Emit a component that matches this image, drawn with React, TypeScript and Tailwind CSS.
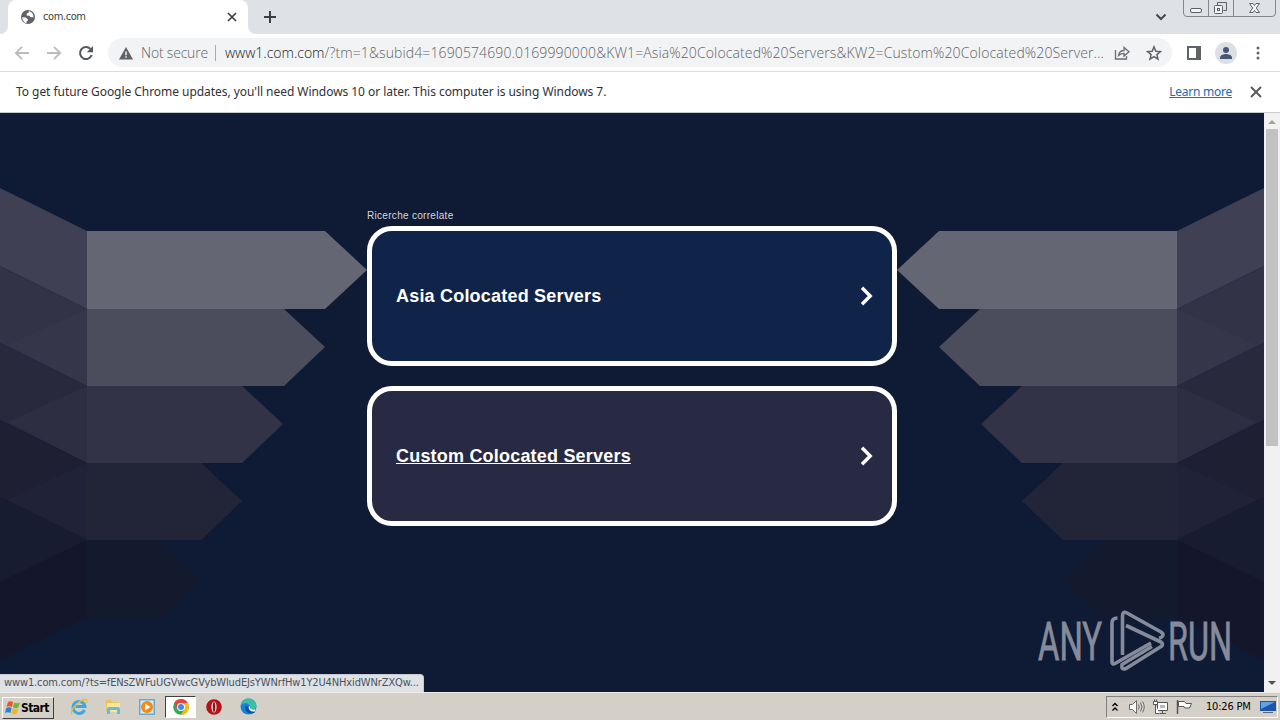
const leftShapes = [
  { points: '0,188 87,231 87,309 0,266', fill: '#3f4053' },
  { points: '87,231 325,231 367,270 325,309 87,309', fill: '#646673' },
  { points: '0,266 87,309 87,386 0,343', fill: '#323347' },
  { points: '8,345 87,309 87,386', fill: '#353649' },
  { points: '87,309 284,309 325,347 284,386 87,386', fill: '#4b4d5c' },
  { points: '0,343 87,386 87,463 0,420', fill: '#28293d' },
  { points: '8,422 87,386 87,463', fill: '#2e2e42' },
  { points: '87,386 242,386 283,424 242,463 87,463', fill: '#323346' },
  { points: '0,420 87,463 87,540 0,497', fill: '#1e1f33' },
  { points: '8,500 87,463 87,540', fill: '#202337' },
  { points: '87,463 201,463 242,501 201,540 87,540', fill: '#222538' },
  { points: '0,497 87,540 0,582', fill: '#181c31' },
  { points: '0,582 87,540 87,617 0,660', fill: '#14172c' },
  { points: '87,540 160,540 201,579 160,617 87,617', fill: '#141a2e' },
];

function Arrows() {
  return (
    <>
      {leftShapes.map((s) => (
        <polygon key={s.points} points={s.points} fill={s.fill} />
      ))}
    </>
  );
}

function Backdrop() {
  return (
    <svg className="absolute inset-0" width="1264" height="579" viewBox="0 113 1264 579">
      <Arrows />
      <g transform="translate(1264 0) scale(-1 1)">
        <Arrows />
      </g>
    </svg>
  );
}

function TabStrip() {
  return (
    <div className="flex h-[34px] bg-[#dee1e6]">
      <div className="flex w-2 items-end bg-white">
        <div className="h-full w-full rounded-br-lg bg-[#dee1e6]" />
      </div>
      <div className="flex w-[240px] items-center rounded-t-lg bg-white pl-3 pr-[10px]">
        <svg width="16" height="16" viewBox="0 0 16 16">
          <circle cx="8" cy="8" r="7" fill="#5f6368" />
          <path d="M2.300 8.200l3.600.2 2 2-.2 1.600-1.200.5v1.600C4 13.700 2.200 11 2.300 8.200zM8.500 2.300l.2 1.500-1.900.8-.2 1.900 2.700.2 1.400 1.500 2.900.1C13.500 4.600 11 2.300 8.500 2.300z" fill="#fff" />
        </svg>
        <span className="ml-[7px] mt-px flex-1 font-['DejaVu_Sans_Condensed','DejaVu_Sans',sans-serif] text-[11px] tracking-[-0.4px] text-[#3c4043]">com.com</span>
        <svg width="12" height="12" viewBox="0 0 12 12" stroke="#3c4043" strokeWidth="1.700">
          <path d="M2 2l8 8M10 2l-8 8" />
        </svg>
      </div>
      <div className="w-2 bg-white">
        <div className="h-full w-full rounded-bl-lg bg-[#dee1e6]" />
      </div>
      <div className="flex flex-1 items-center pl-[7px]">
        <svg width="14" height="14" viewBox="0 0 14 14" stroke="#3c4043" strokeWidth="2">
          <path d="M7 1v12M1 7h12" />
        </svg>
      </div>
      <svg className="mr-4 mt-[11px]" width="12" height="12" viewBox="0 0 12 12" fill="none" stroke="#45484c" strokeWidth="2">
        <path d="M1.500 3.500L6 8l4.500-4.500" />
      </svg>
      <svg className="mr-[3px]" width="94" height="18" viewBox="0 0 94 18" fill="none" stroke="#84878c">
        <path d="M.5 0v13q0 3.500 3.500 3.500h85q3.500 0 3.500-3.500V0M25.500 0v16M50.500 0v16" />
        <g stroke="#5d6065">
          <rect x="7.500" y="8.500" width="11" height="4" rx="1.500" fill="#f3f4f6" />
          <path d="M34.500 5.500v-3h9v8h-3" />
          <rect x="31.500" y="5.500" width="8" height="8" rx="1" fill="#f3f4f6" />
          <rect x="34.500" y="8.500" width="2" height="2" />
          <path d="M66.500 3.500h3.500l1.500 2 1.500-2h3.500l-3.200 4.500 3.200 4.500h-3.500l-1.500-2-1.500 2h-3.500L69.700 8z" fill="#f3f4f6" />
        </g>
      </svg>
    </div>
  );
}

function Toolbar() {
  return (
    <div className="flex h-[38px] items-center border-b border-[#dadce0] bg-white">
      <svg className="ml-[14px]" width="16" height="16" viewBox="0 0 16 16" fill="none" stroke="#babcbe" strokeWidth="1.800">
        <path d="M15 8H2M8 1.800L1.800 8 8 14.200" />
      </svg>
      <svg className="ml-4" width="16" height="16" viewBox="0 0 16 16" fill="none" stroke="#babcbe" strokeWidth="1.800">
        <path d="M1 8h13M8 1.800L14.200 8 8 14.200" />
      </svg>
      <svg className="ml-4" width="16" height="16" viewBox="0 0 16 16" fill="none">
        <path d="M13.700 10A6 6 0 1 1 12.400 3.900" stroke="#53565a" strokeWidth="2" />
        <path d="M15 1v6.200H8.800z" fill="#53565a" />
      </svg>
      <div className="ml-[14px] flex h-[29px] w-[1064px] items-center rounded-full bg-[#f1f3f4] pl-[11px] pr-[10px] font-['Open_Sans','Noto_Sans',sans-serif] text-[14px] font-light">
        <svg width="14" height="14" viewBox="0 0 14 14">
          <path d="M7 1l7 12.500H0z" fill="#5f6368" />
          <path d="M6.300 5.500h1.400v3.700H6.300zM6.300 10.300h1.400v1.400H6.300z" fill="#fff" />
        </svg>
        <span className="ml-[8px] w-[67px] whitespace-nowrap tracking-[-0.2px] text-[#5f6368]">Not secure</span>
        <span className="ml-[7px] h-4 w-px bg-[#a8abaf]" />
        <span className="ml-[9px] flex-1 whitespace-nowrap tracking-[0.12px] text-[#5f6368]">
          <span className="tracking-normal text-[#202124]">www1.com.com</span>/?tm=1&amp;subid4=1690574690.0169990000&amp;KW1=Asia%20Colocated%20Servers&amp;KW2=Custom%20Colocated%20Server...
        </span>
        <svg width="16" height="16" viewBox="0 0 16 16" fill="none" stroke="#6a6d72" strokeWidth="1.300">
          <path d="M1.500 5v9h11v-3M4.500 10.500c.5-3.500 2.500-5 5.500-5V2.500L15 6.800 10 11V8.300c-2.500 0-4 .7-5.500 2.200z" />
        </svg>
        <svg className="ml-4" width="16" height="16" viewBox="0 0 16 16" fill="none" stroke="#5f6368" strokeWidth="1.500">
          <path d="M8 1.800l1.800 4.400 4.700.4-3.600 3 1.100 4.600-4-2.500-4 2.500 1.100-4.600-3.600-3 4.700-.4z" />
        </svg>
      </div>
      <svg className="ml-[14px]" width="16" height="16" viewBox="0 0 16 16">
        <path d="M1 1h14v14H1zM3 3v10h7V3z" fill="#5f6368" fillRule="evenodd" />
      </svg>
      <svg className="ml-[13px]" width="22" height="22" viewBox="0 0 22 22">
        <circle cx="11" cy="11" r="11" fill="#dce0e6" />
        <circle cx="11" cy="8" r="3" fill="#4a5773" />
        <path d="M5 17v-1.500c0-2.500 4-3.500 6-3.500s6 1 6 3.500V17z" fill="#4a5773" />
      </svg>
      <svg className="ml-[18px]" width="6" height="16" viewBox="0 0 6 16" fill="#5f6368">
        <circle cx="3" cy="3" r="1.500" />
        <circle cx="3" cy="8" r="1.500" />
        <circle cx="3" cy="13" r="1.500" />
      </svg>
    </div>
  );
}

function InfoBar() {
  return (
    <div className="flex h-[41px] items-center border-b border-[#c9ccd1] bg-white pl-4 pr-[18px] font-['Noto_Sans',sans-serif] text-[12px] text-[#303134]">
      <span className="flex-1 whitespace-nowrap tracking-[-0.05px]">
        To get future Google Chrome updates, you'll need Windows 10 or later. This computer is using Windows 7.
      </span>
      <a className="whitespace-nowrap tracking-[-0.25px] text-[#2468b8] underline" href="#">Learn more</a>
      <svg className="ml-[18px]" width="12" height="12" viewBox="0 0 12 12" stroke="#53565a" strokeWidth="1.800">
        <path d="M1 1l10 10M11 1L1 11" />
      </svg>
    </div>
  );
}

function Chevron() {
  return (
    <svg width="14" height="20" viewBox="0 0 14 20" fill="none" stroke="#fff" strokeWidth="3.400">
      <path d="M2 1.800L10.200 10 2 18.200" />
    </svg>
  );
}

function Watermark() {
  return (
    <svg className="absolute left-[1030px] top-[491px]" width="220" height="74" viewBox="1030 604 220 74">
      <g fill="#868b9b" stroke="#868b9b" strokeWidth="0.800" fontFamily="Roboto, sans-serif" fontSize="53">
        <text x="1038" y="660" textLength="64" lengthAdjust="spacingAndGlyphs">ANY</text>
        <text x="1168" y="660" textLength="64" lengthAdjust="spacingAndGlyphs">RUN</text>
      </g>
      <g fill="none" stroke="#868b9b" strokeWidth="3.600" strokeLinejoin="round">
        <path d="M1117.500 618q-5.500 0-5.500 5v39q0 3 3 1.500L1151 643" />
        <path d="M1122.500 655v-39q0-5.500 4.500-3L1161 632q4 3 0 5.500l-2 .5" />
        <path d="M1126 625.500L1161 642q3 2 0 4.500l-35 22q-5 2-4-4l30-18" />
      </g>
    </svg>
  );
}

function Scrollbar() {
  return (
    <div className="flex w-4 flex-col items-center bg-[#f1f1f1]">
      <svg width="16" height="16" viewBox="0 0 16 16" fill="#a3a3a3">
        <path d="M4 11h8L8 7z" />
      </svg>
      <div className="h-[317px] w-3 bg-[#c1c1c1]" />
      <div className="flex-1" />
      <svg width="16" height="18" viewBox="0 0 16 18" fill="#505050">
        <path d="M4 7h8l-4 4z" />
      </svg>
    </div>
  );
}

function Page() {
  return (
    <div className="relative flex h-[579px]">
      <main className="relative flex-1 overflow-hidden bg-[#0f1b35]">
        <Backdrop />
        <div className="relative mx-auto w-[530px] pt-[96px] font-['Liberation_Sans',Arial,sans-serif]">
          <p className="h-[17px] text-[10px] leading-[14px] tracking-[0.3px] text-[#d5d8de]">Ricerche correlate</p>
          <a className="flex h-[140px] items-center justify-between rounded-[25px] border-[5px] border-white bg-[#10244a] pl-6 pr-[18px] text-white" href="#">
            <span className="text-[18px] font-bold tracking-[0.2px]">Asia Colocated Servers</span>
            <Chevron />
          </a>
          <a className="mt-5 flex h-[140px] items-center justify-between rounded-[25px] border-[5px] border-white bg-[#272a42] pl-6 pr-[18px] text-white" href="#">
            <span className="text-[18px] font-bold tracking-[0.2px] underline">Custom Colocated Servers</span>
            <Chevron />
          </a>
        </div>
        <Watermark />
      </main>
      <Scrollbar />
      <div className="absolute bottom-0 left-0 flex h-[18px] w-[424px] items-center whitespace-nowrap rounded-tr border-r border-t border-[#c5cad0] bg-[#dee1e6] pl-1 font-['DejaVu_Sans_Condensed','DejaVu_Sans',sans-serif] text-[11px] tracking-[-0.13px] text-[#4d5156]">
        www1.com.com/?ts=fENsZWFuUGVwcGVybWludEJsYWNrfHw1Y2U4NHxidWNrZXQw...
      </div>
    </div>
  );
}

function Taskbar() {
  return (
    <div className="flex h-7 items-center border-t border-[#eeece8] bg-[#d4d0c8] font-['DejaVu_Sans_Condensed','DejaVu_Sans',sans-serif] text-[11px] text-black">
      <button className="ml-[2px] mt-[2px] flex h-[22px] w-[52px] items-center border border-b-[#404040] border-l-white border-r-[#404040] border-t-white pl-[2px] text-[11px] font-bold">
        <svg width="16" height="16" viewBox="0 0 16 16">
          <path d="M3 2q3-1.500 5 0L7 7Q4 5.500 1.500 7z" fill="#e8572b" />
          <path d="M9 2.500q3 1.500 6 0l-1.500 5q-3 1.500-5.500 0z" fill="#77b82a" />
          <path d="M1.200 8q3-1.500 5.500 0l-1.300 5Q3 11.500 0 13z" fill="#2f80d0" />
          <path d="M7.700 8.500q3 1.500 5.500 0l-1.400 5q-3 1.500-5.400 0z" fill="#f5b51b" />
        </svg>
        <span className="text-[12px] tracking-[-0.6px]">Start</span>
      </button>
      <svg className="ml-4" width="18" height="18" viewBox="0 0 18 18" fill="none">
        <path d="M14.500 12A6 6 0 1 1 15 8.500H5.500" stroke="#3fa7df" strokeWidth="3" />
        <path d="M2 16C-.5 13 8 2.500 15 1.500c3-.3 2 2.500 1 4" stroke="#e6bd3e" strokeWidth="1.300" />
      </svg>
      <svg className="ml-4" width="18" height="18" viewBox="0 0 18 18">
        <path d="M2 2h5l1 2h7v10H2z" fill="#e4c25c" />
        <path d="M3 5h13v9H3z" fill="#f7e59a" />
        <path d="M3 16v-5q0-2 2-2h9q2 0 2 2v5h-3v-4H6v4z" fill="#6db6dc" />
      </svg>
      <svg className="ml-4" width="18" height="18" viewBox="0 0 18 18">
        <path d="M1 1h16v16H1z" fill="#68a9d5" />
        <path d="M2.500 2.500h13v13h-13z" fill="#d8edf8" />
        <circle cx="9" cy="9" r="6" fill="#f18a16" />
        <path d="M7 5.500L12.500 9 7 12.500z" fill="#fff" />
      </svg>
      <div className="ml-[9px] flex h-[22px] w-[31px] items-center justify-center border border-b-white border-l-[#404040] border-r-white border-t-[#404040] bg-white">
        <svg width="16" height="16" viewBox="0 0 16 16">
          <circle cx="8" cy="8" r="7.800" fill="#34a853" />
          <path d="M1.200 4.100A7.800 7.800 0 0 1 14.800 4.100H8L4.600 10z" fill="#ea4335" />
          <path d="M14.800 4.100A7.800 7.800 0 0 1 8 15.800L11.400 9.900V4.100z" fill="#fbbc05" />
          <circle cx="8" cy="8" r="4" fill="#fff" />
          <circle cx="8" cy="8" r="3" fill="#4285f4" />
        </svg>
      </div>
      <svg className="ml-[10px]" width="16" height="16" viewBox="0 0 16 16">
        <circle cx="8" cy="8" r="7.800" fill="#b3141a" />
        <ellipse cx="8" cy="8" rx="2.600" ry="5.500" fill="#e9dddd" />
        <ellipse cx="8" cy="8" rx="1.200" ry="5" fill="#9a1015" />
      </svg>
      <svg className="ml-[18px]" width="17" height="17" viewBox="0 0 17 17">
        <circle cx="8.500" cy="8.500" r="8" fill="#1683d8" />
        <path d="M.6 8C1 3.500 4.500.5 8.500.5c5 0 8 3.800 8 7 0 2.500-2 3.800-4.200 3.800-1.800 0-2.800-.7-2.300-1.500C11 7.500 8 5 5 5.300 3 5.500 1.500 6.500.6 8z" fill="#38bfa5" />
        <path d="M5.500 8c-1.500 4 2 7.500 6 7.500 2 0 3.300-1 4-2-3.500 1-7-.5-6-4.500z" fill="#0c529d" />
        <path d="M10 8q-1 4 5.500 3.300l-.8 2.200Q9 14 8.500 9z" fill="#e5eff5" />
      </svg>
      <div className="flex-1" />
      <div className="mr-[2px] mt-px flex h-[22px] w-[172px] items-center border border-b-white border-l-[#808080] border-r-white border-t-[#808080] pl-[4px]">
        <svg width="8" height="10" viewBox="0 0 8 10" fill="none" stroke="#000" strokeWidth="1.400">
          <path d="M1.500 4L4 1.500 6.500 4M1.500 8.500L4 6l2.500 2.500" />
        </svg>
        <svg className="ml-[9px]" width="18" height="16" viewBox="0 0 18 16" fill="none" stroke="#6c6c6c">
          <path d="M1.500 5.500h3l4-4v13l-4-4h-3z" fill="#fff" />
          <path d="M10.500 5.500q1.500 2.500 0 5M12.500 3.500q3 4.500 0 9M14.500 2.500q3.500 5.500 0 11" />
        </svg>
        <svg className="ml-[6px]" width="17" height="16" viewBox="0 0 17 16" fill="#fff" stroke="#555">
          <path d="M5.500 3.500h10v8h-10zM8 14.500h6M10.500 12v2" />
          <path d="M8 6h5v3H8z" fill="#b8b8b8" stroke="none" />
          <path d="M1.500 2.500h4v3h-4zM2.500.5v2M4.500.5v2M3.500 5.500v9h4" />
        </svg>
        <svg className="ml-[7px]" width="17" height="16" viewBox="0 0 17 16" fill="#fff" stroke="#555">
          <path d="M1.500 1v14" strokeWidth="1.500" />
          <path d="M2.500 2.500h6l1.500 2h5.500l-2 4.500H9L8 7.500H2.500z" />
        </svg>
        <span className="ml-[13px] mt-px w-[46px] whitespace-nowrap tracking-[-0.2px]">10:26 PM</span>
        <svg className="ml-[8px]" width="16" height="14" viewBox="0 0 16 14">
          <path d="M0 1h16v10H0z" fill="#1c55ad" />
          <path d="M1 2h14L1 9z" fill="#5fa2e2" />
          <path d="M3 12h10v1H3z" fill="#5a6470" />
        </svg>
      </div>
    </div>
  );
}

export default function App() {
  return (
    <div className="h-[720px] w-[1280px] overflow-hidden bg-white">
      <TabStrip />
      <Toolbar />
      <InfoBar />
      <Page />
      <Taskbar />
    </div>
  );
}
